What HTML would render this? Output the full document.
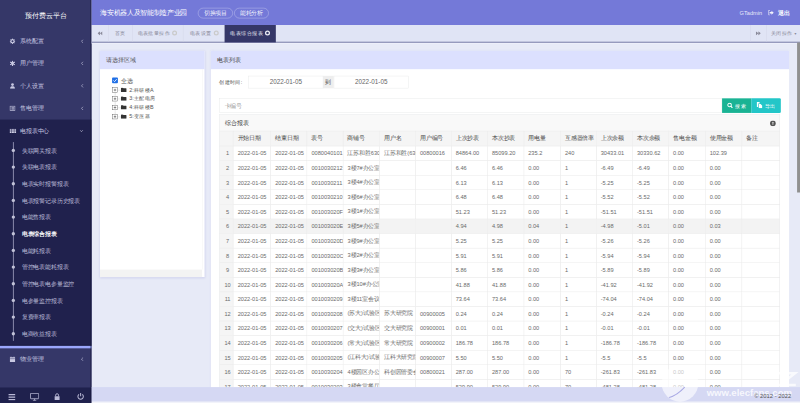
<!DOCTYPE html>
<html><head><meta charset="utf-8">
<style>
html,body{margin:0;padding:0;width:800px;height:403px;overflow:hidden;background:#e7eaf7;}
#root{position:absolute;left:0;top:0;width:1920px;height:967px;transform:scale(0.4166667);transform-origin:0 0;font-family:"Liberation Sans",sans-serif;overflow:hidden;background:#e7eaf7;}
.a{position:absolute;}
/* sidebar */
#side{position:absolute;left:0;top:0;width:220px;height:967px;background:#353768;overflow:hidden;}
#side .logo{position:absolute;left:0;top:0;width:220px;height:72px;line-height:74px;text-align:center;color:#fff;font-size:17px;}
.mi{position:absolute;left:0;width:220px;height:54px;line-height:54px;color:#c9c9e2;font-size:14px;}
.mi .ic{position:absolute;left:23px;top:20px;width:14px;height:14px;}
.mi .tx{position:absolute;left:48px;top:0;}
.mi .ar{position:absolute;left:194px;top:22px;}
#act{position:absolute;left:0;top:287px;width:220px;height:540px;background:#20214d;}
#sl{position:absolute;left:31px;top:341px;width:2px;height:477px;background:#9d9dbd;}
.si{position:absolute;left:0;width:220px;height:40px;line-height:40px;font-size:14px;color:#bdbdd9;}
.si .dot{position:absolute;left:28px;top:16px;width:8px;height:8px;border-radius:50%;background:#c2c2d8;}
.si .tx{position:absolute;left:52px;top:0;}
#sline{position:absolute;left:0;top:830px;width:220px;height:5.5px;background:#9ba7fd;}
#sdark{position:absolute;left:0;top:827px;width:220px;height:3px;background:#111336;}
#tool{position:absolute;left:0;top:930px;width:220px;height:37px;background:#1f214d;}
#sedge{position:absolute;left:216px;top:0;width:4px;height:967px;background:rgba(20,20,50,0.35);}
/* header */
#hdr{position:absolute;left:220px;top:0;width:1700px;height:60px;background:#7479d8;}
#hdr .ttl{position:absolute;left:21px;top:0;line-height:61px;color:#fff;font-size:16px;}
.pill{position:absolute;top:19px;height:23px;border:1px solid rgba(255,255,255,0.6);border-radius:13px;color:rgba(255,255,255,0.9);font-size:13.5px;line-height:23px;text-align:center;}
/* tabs */
#tabs{position:absolute;left:220px;top:60px;width:1700px;height:40px;background:#e0e4f5;border-bottom:3px solid #878bb2;}
#tabl{position:absolute;left:220px;top:103px;width:1700px;height:2px;background:#eff1fc;}
.tab{position:absolute;top:0;height:40px;line-height:40px;font-size:13px;color:#8a8a9a;}
.sep{position:absolute;top:0;width:1px;height:40px;background:#d2d4e8;}
.tab .ci{display:inline-block;width:12px;height:12px;border:3.5px solid #cacaca;border-radius:50%;box-sizing:border-box;vertical-align:-1px;margin-left:5px;}
/* panels */
.pnl{position:absolute;background:#fff;box-shadow:0 1px 5px rgba(140,140,220,0.3);}
.ph{position:absolute;left:0;top:0;right:0;height:44px;background:#dce0fe;color:#555;font-size:13.5px;line-height:45px;padding-left:15px;}
.inp{position:absolute;border:1px solid #e5e6e7;box-sizing:border-box;background:#fff;color:#666;font-size:15.2px;}
/* table */
#tp{position:absolute;left:526px;top:274px;width:1346px;height:660px;background:#f9f9f9;border:1px solid #e7eaec;box-sizing:border-box;overflow:hidden;}
table{border-collapse:collapse;position:absolute;left:-1px;top:39px;table-layout:fixed;width:1345px;}
td,th{border:1px solid #e7e7e7;height:34px;padding:0 0 0 10px;font-size:13.5px;color:#6a6a6a;white-space:nowrap;overflow:hidden;text-align:left;font-weight:normal;background:#fff;}
th{height:35px;background:#f5f5f5;color:#444;}
td.ix,th.ix{background:#f5f5f5;text-align:center;padding:0 0 0 6px;}
tr.hv td{background:#f3f3f3;}
#foot{position:absolute;left:220px;top:929px;width:1700px;height:35px;background:#d5d8f3;}
#fl{position:absolute;left:220px;top:964px;width:1700px;height:3px;background:#f4f4fa;}
#scr{position:absolute;left:1913px;top:102px;width:7px;height:360px;background:#909090;}
</style></head>
<body><div id="root">

<div id="side">
  <div class="logo">预付费云平台</div>
  <div class="mi" style="top:72px"><svg class="ic" viewBox="0 0 14 14"><path d="M13.50 5.88 L13.50 8.12 L11.78 8.08 L11.14 9.61 L12.39 10.81 L10.81 12.39 L9.61 11.14 L8.08 11.78 L8.12 13.50 L5.88 13.50 L5.92 11.78 L4.39 11.14 L3.19 12.39 L1.61 10.81 L2.86 9.61 L2.22 8.08 L0.50 8.12 L0.50 5.88 L2.22 5.92 L2.86 4.39 L1.61 3.19 L3.19 1.61 L4.39 2.86 L5.92 2.22 L5.88 0.50 L8.12 0.50 L8.08 2.22 L9.61 2.86 L10.81 1.61 L12.39 3.19 L11.14 4.39 L11.78 5.92Z M7 4.6A2.4 2.4 0 1 0 7 9.4A2.4 2.4 0 1 0 7 4.6Z" fill="#c9c9e2" fill-rule="evenodd"/></svg><span class="tx">系统配置</span><svg class="ar" width="7" height="10" viewBox="0 0 7 10"><path d="M5.5 1L1.5 5L5.5 9" fill="none" stroke="#c9c9e2" stroke-width="1.5"/></svg></div>
  <div class="mi" style="top:125px"><svg class="ic" viewBox="0 0 14 14"><path d="M7 0.5V13.5M1.4 3.75L12.6 10.25M1.4 10.25L12.6 3.75" stroke="#c9c9e2" stroke-width="2.8"/><circle cx="7" cy="7" r="3" fill="#c9c9e2"/></svg><span class="tx">用户管理</span><svg class="ar" width="7" height="10" viewBox="0 0 7 10"><path d="M5.5 1L1.5 5L5.5 9" fill="none" stroke="#c9c9e2" stroke-width="1.5"/></svg></div>
  <div class="mi" style="top:179px"><svg class="ic" viewBox="0 0 12 12"><circle cx="6" cy="3.5" r="2.8" fill="#c9c9e2"/><path d="M1 12C1 8 3 7 6 7S11 8 11 12Z" fill="#c9c9e2"/></svg><span class="tx">个人设置</span><svg class="ar" width="7" height="10" viewBox="0 0 7 10"><path d="M5.5 1L1.5 5L5.5 9" fill="none" stroke="#c9c9e2" stroke-width="1.5"/></svg></div>
  <div class="mi" style="top:233px"><svg class="ic" viewBox="0 0 14 14"><rect x="0.8" y="1.8" width="12.4" height="10.4" fill="none" stroke="#c9c9e2" stroke-width="1.6"/><path d="M2.5 5H4M5 5H11.5M2.5 7.2H4M5 7.2H11.5M2.5 9.4H4M5 9.4H11.5" stroke="#c9c9e2" stroke-width="1.4"/></svg><span class="tx">售电管理</span><svg class="ar" width="7" height="10" viewBox="0 0 7 10"><path d="M5.5 1L1.5 5L5.5 9" fill="none" stroke="#c9c9e2" stroke-width="1.5"/></svg></div>
  <div id="act"></div>
  <div class="mi" style="top:287px"><svg class="a" style="left:23px;top:22px" width="16" height="10" viewBox="0 0 16 10"><path d="M0 0h4.6v2.6h-4.6zM5.7 0h4.6v2.6h-4.6zM11.4 0h4.6v2.6h-4.6zM0 3.7h4.6v2.6h-4.6zM5.7 3.7h4.6v2.6h-4.6zM11.4 3.7h4.6v2.6h-4.6zM0 7.4h4.6v2.6h-4.6zM5.7 7.4h4.6v2.6h-4.6zM11.4 7.4h4.6v2.6h-4.6z" fill="#d0d0e6"/></svg><span class="tx">电报表中心</span><svg class="ar" style="left:191px;top:24px" width="9" height="7" viewBox="0 0 9 7"><path d="M1 1.5L4.5 5L8 1.5" fill="none" stroke="#d0d0e6" stroke-width="1.5"/></svg></div>
  <div id="sl"></div>
  <div class="si" style="top:341px"><span class="dot"></span><span class="tx">失联网关报表</span></div>
  <div class="si" style="top:381px"><span class="dot"></span><span class="tx">失联电表报表</span></div>
  <div class="si" style="top:421px"><span class="dot"></span><span class="tx">电表实时报警报表</span></div>
  <div class="si" style="top:461px"><span class="dot"></span><span class="tx">电表报警记录历史报表</span></div>
  <div class="si" style="top:501px"><span class="dot"></span><span class="tx">电能售报表</span></div>
  <div class="si" style="top:541px;color:#fff;font-weight:bold"><span class="dot"></span><span class="tx">电表综合报表</span></div>
  <div class="si" style="top:581px"><span class="dot"></span><span class="tx">电能耗报表</span></div>
  <div class="si" style="top:621px"><span class="dot"></span><span class="tx">管控电表能耗报表</span></div>
  <div class="si" style="top:661px"><span class="dot"></span><span class="tx">管控电表电参量监控</span></div>
  <div class="si" style="top:701px"><span class="dot"></span><span class="tx">电参量监控报表</span></div>
  <div class="si" style="top:741px"><span class="dot"></span><span class="tx">复费率报表</span></div>
  <div class="si" style="top:781px"><span class="dot"></span><span class="tx">电商收益报表</span></div>
  <div id="sdark"></div><div id="sline"></div>
  <div class="mi" style="top:835px"><svg class="ic" viewBox="0 0 12 12"><rect x="0.5" y="2" width="11" height="10" fill="#c9c9e2"/><path d="M3 0.5V3M9 0.5V3" stroke="#c9c9e2" stroke-width="1.5"/><path d="M1 5H11" stroke="#353768" stroke-width="1"/></svg><span class="tx">物业管理</span><svg class="ar" width="7" height="10" viewBox="0 0 7 10"><path d="M5.5 1L1.5 5L5.5 9" fill="none" stroke="#c9c9e2" stroke-width="1.5"/></svg></div>
  <div id="tool">
    <svg class="a" style="left:20px;top:15px" width="17" height="16" viewBox="0 0 17 16"><path d="M0 2H17M0 8H17M0 14H17" stroke="#b9b9d6" stroke-width="2.6"/></svg>
    <svg class="a" style="left:72px;top:13px" width="22" height="19" viewBox="0 0 22 19"><rect x="1" y="1" width="20" height="13" rx="1.5" fill="none" stroke="#b9b9d6" stroke-width="2"/><path d="M7 18H15M11 14V18" stroke="#b9b9d6" stroke-width="2"/></svg>
    <svg class="a" style="left:130px;top:13px" width="14" height="18" viewBox="0 0 14 18"><path d="M3.5 8V5.5A3.5 3.5 0 0 1 10.5 5.5V8" fill="none" stroke="#b9b9d6" stroke-width="2.2"/><rect x="1" y="8" width="12" height="9" fill="#b9b9d6"/></svg>
    <svg class="a" style="left:184px;top:12px" width="19" height="19" viewBox="0 0 19 19"><path d="M5.5 4.5A6.5 6.5 0 1 0 13.5 4.5" fill="none" stroke="#b9b9d6" stroke-width="2.4"/><path d="M9.5 1V9" stroke="#b9b9d6" stroke-width="2.4"/></svg>
  </div>
  <div id="sedge"></div>
</div>

<div id="hdr">
  <div class="ttl">海安机器人及智能制造产业园</div>
  <div class="pill" style="left:255px;width:82px">切换项目</div>
  <div class="pill" style="left:342px;width:81px">能耗分析</div>
  <div class="a" style="left:1555px;top:1px;line-height:60px;color:rgba(255,255,255,0.85);font-size:13.5px">GTadmin</div>
  <svg class="a" style="left:1623px;top:24px" width="15" height="13" viewBox="0 0 15 13"><path d="M5 1H2Q1 1 1 2V11Q1 12 2 12H5" fill="none" stroke="rgba(255,255,255,0.85)" stroke-width="1.6"/><path d="M4 4.5H8.5V1.5L14 6.5L8.5 11.5V8.5H4Z" fill="rgba(255,255,255,0.9)"/></svg>
  <div class="a" style="left:1647px;top:0;line-height:60px;color:#fff;font-size:14px;font-weight:bold">退出</div>
</div>

<div id="tabs">
  <svg class="a" style="left:14px;top:15px" width="12" height="10" viewBox="0 0 12 10"><path d="M6 0L0 5L6 10ZM12 0L6 5L12 10Z" fill="#8a8a9a"/></svg>
  <div class="sep" style="left:40px"></div>
  <div class="tab" style="left:55px">首页</div>
  <div class="sep" style="left:97px"></div>
  <div class="tab" style="left:110px">电表批量操作<span class="ci"></span></div>
  <div class="sep" style="left:219px"></div>
  <div class="tab" style="left:236px">电表设置<span class="ci"></span></div>
  <div class="a" style="left:319px;top:0;width:123px;height:41.5px;background:#353768"></div>
  <div class="tab" style="left:333px;color:#e6e6f2">电表综合报表<span class="ci" style="border-color:#f0f0f8"></span></div>
  <div class="sep" style="left:1581px"></div>
  <svg class="a" style="left:1594px;top:15px" width="12" height="10" viewBox="0 0 12 10"><path d="M0 0L6 5L0 10ZM6 0L12 5L6 10Z" fill="#8a8a9a"/></svg>
  <div class="sep" style="left:1619px"></div>
  <div class="tab" style="left:1630px">关闭操作<span style="font-size:8px;margin-left:3px;vertical-align:1px">&#9660;</span></div>
</div>

<div id="tabl"></div>
<div class="pnl" style="left:240px;top:122px;width:251px;height:543px;">
  <div class="ph">请选择区域</div>
  <div class="a" style="left:0;top:525px;width:245px;height:18px;background:#f3f3f3"></div>
  <div class="a" style="left:244.5px;top:44px;width:1px;height:481px;background:#f0f0f0"></div>
  <div class="a" style="left:29px;top:64px;width:14px;height:14px;background:#1f6fe6;border-radius:2px"><svg width="14" height="14" viewBox="0 0 14 14"><path d="M3 7L6 10L11 4" fill="none" stroke="#fff" stroke-width="2"/></svg></div>
  <div class="a" style="left:50px;top:60px;font-size:14px;color:#555;line-height:22px">全选</div>
  <!--TREE--><div id="tree">
<div class="a" style="left:35.5px;top:88px;width:0;height:66px;border-left:1px dotted #999"></div>
<div class="a" style="left:41px;top:94px;width:8px;height:0;border-top:1px dotted #999"></div><div class="a" style="left:30px;top:88px;width:12px;height:12px;border:1px solid #555;box-sizing:border-box;background:#fff"><svg class="a" style="left:0;top:0" width="10" height="10" viewBox="0 0 10 10"><path d="M2 5H8M5 2V8" stroke="#333" stroke-width="1.2"/></svg></div><svg class="a" style="left:50px;top:88px" width="14" height="11" viewBox="0 0 14 11"><path d="M0 1.5Q0 0.5 1 0.5H5L6.5 2H13Q14 2 14 3V10Q14 11 13 11H1Q0 11 0 10Z" fill="#333"/></svg><div class="a" style="left:70px;top:84px;line-height:20px;font-size:13px;color:#555">2:科研楼A</div>
<div class="a" style="left:41px;top:115px;width:8px;height:0;border-top:1px dotted #999"></div><div class="a" style="left:30px;top:109px;width:12px;height:12px;border:1px solid #555;box-sizing:border-box;background:#fff"><svg class="a" style="left:0;top:0" width="10" height="10" viewBox="0 0 10 10"><path d="M2 5H8M5 2V8" stroke="#333" stroke-width="1.2"/></svg></div><svg class="a" style="left:50px;top:109px" width="14" height="11" viewBox="0 0 14 11"><path d="M0 1.5Q0 0.5 1 0.5H5L6.5 2H13Q14 2 14 3V10Q14 11 13 11H1Q0 11 0 10Z" fill="#333"/></svg><div class="a" style="left:70px;top:105px;line-height:20px;font-size:13px;color:#555">3:主配电房</div>
<div class="a" style="left:41px;top:136px;width:8px;height:0;border-top:1px dotted #999"></div><div class="a" style="left:30px;top:130px;width:12px;height:12px;border:1px solid #555;box-sizing:border-box;background:#fff"><svg class="a" style="left:0;top:0" width="10" height="10" viewBox="0 0 10 10"><path d="M2 5H8M5 2V8" stroke="#333" stroke-width="1.2"/></svg></div><svg class="a" style="left:50px;top:130px" width="14" height="11" viewBox="0 0 14 11"><path d="M0 1.5Q0 0.5 1 0.5H5L6.5 2H13Q14 2 14 3V10Q14 11 13 11H1Q0 11 0 10Z" fill="#333"/></svg><div class="a" style="left:70px;top:126px;line-height:20px;font-size:13px;color:#555">4:科研楼B</div>
<div class="a" style="left:41px;top:157.6px;width:8px;height:0;border-top:1px dotted #999"></div><div class="a" style="left:30px;top:151.6px;width:12px;height:12px;border:1px solid #555;box-sizing:border-box;background:#fff"><svg class="a" style="left:0;top:0" width="10" height="10" viewBox="0 0 10 10"><path d="M2 5H8M5 2V8" stroke="#333" stroke-width="1.2"/></svg></div><svg class="a" style="left:50px;top:151.6px" width="14" height="11" viewBox="0 0 14 11"><path d="M0 1.5Q0 0.5 1 0.5H5L6.5 2H13Q14 2 14 3V10Q14 11 13 11H1Q0 11 0 10Z" fill="#333"/></svg><div class="a" style="left:70px;top:147.6px;line-height:20px;font-size:13px;color:#555">5:变压器</div>
</div><!--/TREE-->
</div>

<div class="pnl" style="left:506px;top:122px;width:1388px;height:820px;">
  <div class="ph" style="color:#444">电表列表</div>
  <div class="a" style="left:20px;top:66px;line-height:20px;font-size:13px;color:#555">创建时间:</div>
  <div class="inp" style="left:90px;top:60px;width:180px;height:30px;line-height:28px;text-align:center">2022-01-05</div>
  <div class="a" style="left:269px;top:60px;width:26px;height:30px;background:#eee;line-height:30px;text-align:center;font-size:14px;color:#555">到</div>
  <div class="inp" style="left:295px;top:60px;width:180px;height:30px;line-height:28px;text-align:center">2022-01-05</div>
  <div class="inp" style="left:20px;top:114px;width:1207px;height:35px;line-height:33px;padding-left:12px;color:#999;font-size:14px">卡编号</div>
  <div class="a" style="left:1227px;top:114px;width:70px;height:35px;background:#1ab394;color:#fff;font-size:13px;line-height:35px;text-align:center"><svg style="vertical-align:-2px;margin-right:6px" width="14" height="14" viewBox="0 0 14 14"><circle cx="6" cy="6" r="4.3" fill="none" stroke="#fff" stroke-width="2.4"/><path d="M9 9L13 13" stroke="#fff" stroke-width="2.6"/></svg>搜索</div>
  <div class="a" style="left:1297px;top:114px;width:71px;height:35px;background:#23c6c8;color:#fff;font-size:13px;line-height:35px;text-align:center;border-radius:0 3px 3px 0"><svg style="vertical-align:-2px;margin-right:6px" width="14" height="15" viewBox="0 0 14 15"><path d="M0 0H7V3.5H3.5V12H0Z" fill="#fff"/><path d="M5 4.5H9.5L13.5 8.5V15H5Z" fill="#fff"/></svg>导出</div>
</div>

<div id="tp">
  <div class="a" style="left:14px;top:0;line-height:44px;font-size:13.5px;color:#333">综合报表</div>
  <svg class="a" style="left:1321px;top:14px" width="14" height="14" viewBox="0 0 14 14"><circle cx="7" cy="7" r="7" fill="#555"/><rect x="5.9" y="3.2" width="2.2" height="7.6" rx="1" fill="#ddd"/></svg>
  <table id="tbl">
<colgroup>
<col style="width:33.4px">
<col style="width:90.0px">
<col style="width:87.1px">
<col style="width:86.4px">
<col style="width:87.6px">
<col style="width:86.4px">
<col style="width:85.8px">
<col style="width:87.0px">
<col style="width:87.0px">
<col style="width:88.2px">
<col style="width:85.8px">
<col style="width:87.0px">
<col style="width:86.6px">
<col style="width:88.1px">
<col style="width:87.4px">
<col style="width:91.2px">
</colgroup>
<tr><th class="ix"></th><th>开始日期</th><th>结束日期</th><th>表号</th><th>商铺号</th><th>用户名</th><th>用户编号</th><th>上次抄表</th><th>本次抄表</th><th>用电量</th><th>互感器倍率</th><th>上次余额</th><th>本次余额</th><th>售电金额</th><th>使用金额</th><th>备注</th></tr>
<tr><td class="ix">1</td><td>2022-01-05</td><td>2022-01-05</td><td>0080040101</td><td>江苏和胜630(1</td><td>江苏和胜(630</td><td>00800016</td><td>84864.00</td><td>85099.20</td><td>235.2</td><td>240</td><td>30433.01</td><td>30330.62</td><td>0.00</td><td>102.39</td><td></td></tr>
<tr><td class="ix">2</td><td>2022-01-05</td><td>2022-01-05</td><td>0010030212</td><td>3楼7#办公室</td><td></td><td></td><td>6.46</td><td>6.46</td><td>0.00</td><td>1</td><td>-6.49</td><td>-6.49</td><td>0.00</td><td>0.00</td><td></td></tr>
<tr><td class="ix">3</td><td>2022-01-05</td><td>2022-01-05</td><td>0010030211</td><td>3楼4#办公室</td><td></td><td></td><td>6.13</td><td>6.13</td><td>0.00</td><td>1</td><td>-5.25</td><td>-5.25</td><td>0.00</td><td>0.00</td><td></td></tr>
<tr><td class="ix">4</td><td>2022-01-05</td><td>2022-01-05</td><td>0010030210</td><td>3楼6#办公室</td><td></td><td></td><td>6.48</td><td>6.48</td><td>0.00</td><td>1</td><td>-5.52</td><td>-5.52</td><td>0.00</td><td>0.00</td><td></td></tr>
<tr><td class="ix">5</td><td>2022-01-05</td><td>2022-01-05</td><td>001003020F</td><td>3楼1#办公室</td><td></td><td></td><td>51.23</td><td>51.23</td><td>0.00</td><td>1</td><td>-51.51</td><td>-51.51</td><td>0.00</td><td>0.00</td><td></td></tr>
<tr class="hv"><td class="ix">6</td><td>2022-01-05</td><td>2022-01-05</td><td>001003020E</td><td>3楼5#办公室</td><td></td><td></td><td>4.94</td><td>4.98</td><td>0.04</td><td>1</td><td>-4.98</td><td>-5.01</td><td>0.00</td><td>0.03</td><td></td></tr>
<tr><td class="ix">7</td><td>2022-01-05</td><td>2022-01-05</td><td>001003020D</td><td>3楼9#办公室</td><td></td><td></td><td>5.25</td><td>5.25</td><td>0.00</td><td>1</td><td>-5.26</td><td>-5.26</td><td>0.00</td><td>0.00</td><td></td></tr>
<tr><td class="ix">8</td><td>2022-01-05</td><td>2022-01-05</td><td>001003020C</td><td>3楼2#办公室</td><td></td><td></td><td>5.91</td><td>5.91</td><td>0.00</td><td>1</td><td>-5.94</td><td>-5.94</td><td>0.00</td><td>0.00</td><td></td></tr>
<tr><td class="ix">9</td><td>2022-01-05</td><td>2022-01-05</td><td>001003020B</td><td>3楼3#办公室</td><td></td><td></td><td>5.86</td><td>5.86</td><td>0.00</td><td>1</td><td>-5.89</td><td>-5.89</td><td>0.00</td><td>0.00</td><td></td></tr>
<tr><td class="ix">10</td><td>2022-01-05</td><td>2022-01-05</td><td>001003020A</td><td>3楼10#办公室</td><td></td><td></td><td>41.88</td><td>41.88</td><td>0.00</td><td>1</td><td>-41.92</td><td>-41.92</td><td>0.00</td><td>0.00</td><td></td></tr>
<tr><td class="ix">11</td><td>2022-01-05</td><td>2022-01-05</td><td>0010030209</td><td>3楼11室会议室</td><td></td><td></td><td>73.64</td><td>73.64</td><td>0.00</td><td>1</td><td>-74.04</td><td>-74.04</td><td>0.00</td><td>0.00</td><td></td></tr>
<tr><td class="ix">12</td><td>2022-01-05</td><td>2022-01-05</td><td>0010030208</td><td>(苏大)试验区1</td><td>苏大研究院</td><td>00900005</td><td>0.24</td><td>0.24</td><td>0.00</td><td>1</td><td>-0.24</td><td>-0.24</td><td>0.00</td><td>0.00</td><td></td></tr>
<tr><td class="ix">13</td><td>2022-01-05</td><td>2022-01-05</td><td>0010030207</td><td>(交大)试验区1</td><td>交大研究院</td><td>00900001</td><td>0.01</td><td>0.01</td><td>0.00</td><td>1</td><td>-0.01</td><td>-0.01</td><td>0.00</td><td>0.00</td><td></td></tr>
<tr><td class="ix">14</td><td>2022-01-05</td><td>2022-01-05</td><td>0010030206</td><td>(常大)试验区1</td><td>常大研究院</td><td>00900002</td><td>186.78</td><td>186.78</td><td>0.00</td><td>1</td><td>-186.78</td><td>-186.78</td><td>0.00</td><td>0.00</td><td></td></tr>
<tr><td class="ix">15</td><td>2022-01-05</td><td>2022-01-05</td><td>0010030205</td><td>(江科大)试验区</td><td>江科大研究院</td><td>00900007</td><td>5.50</td><td>5.50</td><td>0.00</td><td>1</td><td>-5.5</td><td>-5.5</td><td>0.00</td><td>0.00</td><td></td></tr>
<tr><td class="ix">16</td><td>2022-01-05</td><td>2022-01-05</td><td>0010030204</td><td>4楼园区办公室</td><td>科创园管委会</td><td>00800021</td><td>287.00</td><td>287.00</td><td>0.00</td><td>70</td><td>-261.83</td><td>-261.83</td><td>0.00</td><td>0.00</td><td></td></tr>
<tr><td class="ix">17</td><td>2022-01-05</td><td>2022-01-05</td><td>0010030203</td><td>3楼食堂餐厅</td><td></td><td></td><td>529.90</td><td>529.90</td><td>0.00</td><td>70</td><td>-481.28</td><td>-481.28</td><td>0.00</td><td>0.00</td><td></td></tr>
</table>
</div>

<div id="foot"></div>
<div id="fl"></div>
<div id="scr"></div>
<div id="wm" class="a" style="left:1560px;top:860px;width:360px;height:107px;pointer-events:none">
<div class="a" style="left:28px;top:16px;width:88px;height:88px;border-radius:50%;background:rgba(255,255,255,0.62)"></div>
<svg class="a" style="left:40px;top:60px" width="70" height="50" viewBox="0 0 70 50"><path d="M6 33.8Q24 30 43.3 9.3" fill="none" stroke="rgba(160,160,225,0.9)" stroke-width="2.5"/></svg>
<div class="a" style="left:136px;top:67px;font-size:23px;font-weight:bold;color:rgba(255,255,255,0.8);line-height:30px;white-space:nowrap">www.elecfans.com</div>
<svg class="a" style="left:300px;top:28px" width="60" height="40" viewBox="0 0 60 40"><path d="M8 8H48L12 36H50" fill="none" stroke="rgba(255,255,255,0.75)" stroke-width="6"/></svg>
</div>


<div class="a" style="left:1810px;top:933px;line-height:35px;font-size:14px;color:#555;white-space:nowrap">&copy; 2012 - 2022</div>
</div>
</body></html>
